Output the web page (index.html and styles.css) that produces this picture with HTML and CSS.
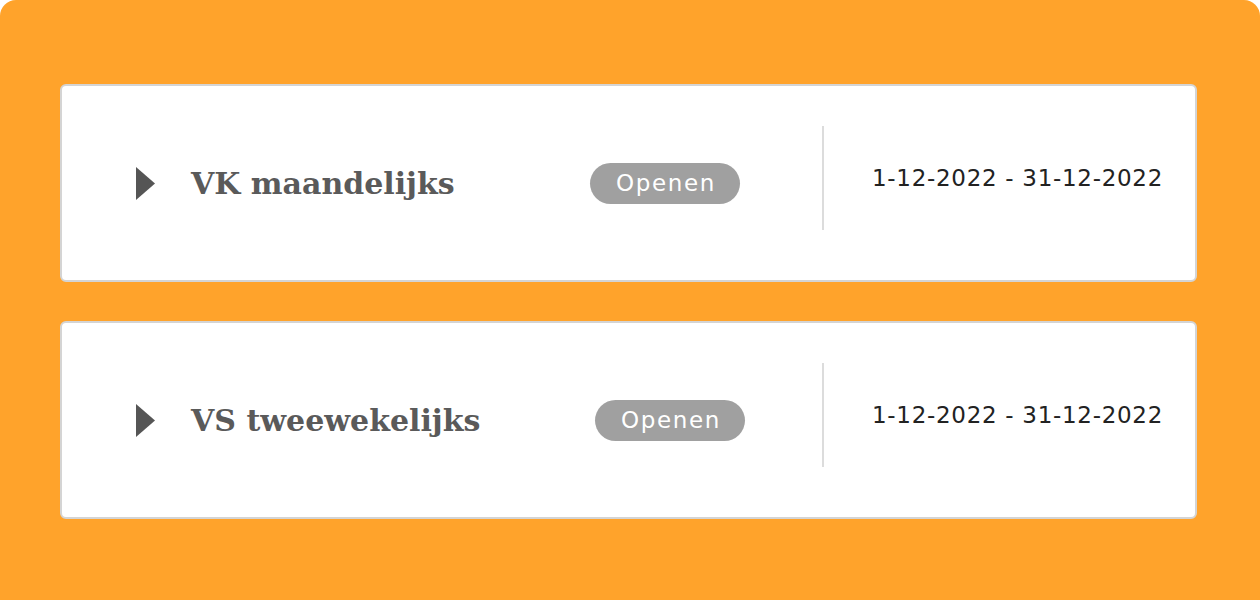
FILE: index.html
```html
<!DOCTYPE html>
<html lang="nl">
<head>
<meta charset="utf-8">
<link rel="stylesheet" href="styles.css">
</head>
<body>
<div class="stage">
  <div class="card">
    <div class="main">
      <svg class="caret" width="20" height="33" viewBox="0 0 20 33"><path d="M0 0 L19 16.5 L0 33 Z" fill="#555"/></svg>
      <h2 class="title">VK maandelijks</h2>
      <span class="badge badge-a">Openen</span>
    </div>
    <div class="divider"></div>
    <div class="dates">1-12-2022 - 31-12-2022</div>
  </div>
  <div class="card">
    <div class="main">
      <svg class="caret" width="20" height="33" viewBox="0 0 20 33"><path d="M0 0 L19 16.5 L0 33 Z" fill="#555"/></svg>
      <h2 class="title">VS tweewekelijks</h2>
      <span class="badge badge-b">Openen</span>
    </div>
    <div class="divider"></div>
    <div class="dates">1-12-2022 - 31-12-2022</div>
  </div>
</div>
</body>
</html>
```
FILE: styles.css
```css
html, body { margin: 0; padding: 0; background: #fff; }
.stage {
  width: 1260px;
  height: 600px;
  box-sizing: border-box;
  background: #FFA32B;
  border-radius: 16px 16px 0 0;
  padding: 84px 63px 0 60px;
  display: flex;
  flex-direction: column;
  gap: 39px;
}
.card {
  height: 198px;
  box-sizing: border-box;
  background: #fff;
  border: 2px solid #d4d4d4;
  border-radius: 6px;
  display: flex;
  align-items: center;
  padding-left: 74px;
}
.main {
  display: flex;
  align-items: center;
  width: 686px;
}
.caret { display: block; flex: none; }
.title {
  margin: 0 0 0 35px;
  font-family: "DejaVu Serif", serif;
  font-weight: bold;
  font-size: 30px;
  color: #5a5a5a;
  width: 399px;
  flex: none;
  white-space: nowrap;
}
.badge {
  display: inline-flex;
  align-items: center;
  justify-content: center;
  height: 41px;
  width: 150px;
  flex: none;
  border-radius: 21px;
  background: #a0a0a0;
  color: #fff;
  font-family: "DejaVu Sans", sans-serif;
  font-size: 23px;
  letter-spacing: 1.6px;
  padding-left: 2px;
  box-sizing: border-box;
}
.badge-b { margin-left: 5px; }
.divider {
  width: 2px;
  height: 104px;
  background: #dcdcdc;
  margin-top: -10px;
}
.dates {
  margin-left: 48px;
  font-family: "DejaVu Sans", sans-serif;
  font-size: 23px;
  letter-spacing: 0.7px;
  color: #222;
  margin-top: -10px;
  white-space: nowrap;
}
```
